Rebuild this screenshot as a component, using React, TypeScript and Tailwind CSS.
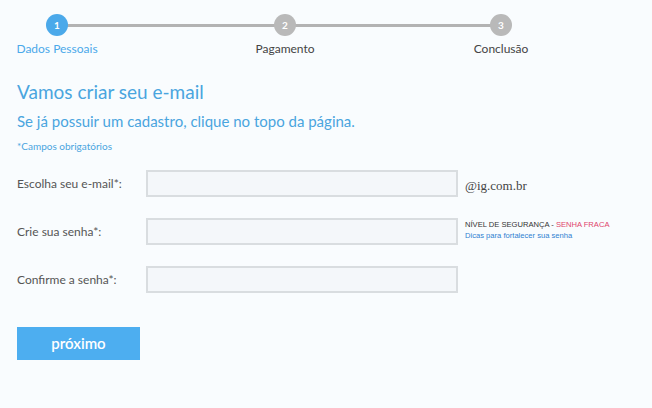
import React from 'react'

const font = { fontFamily: 'Lato, "Open Sans", sans-serif' }

function StepDot({ n, active }: { n: number; active?: boolean }) {
  return (
    <div
      className={`relative z-10 flex h-[22px] w-[22px] items-center justify-center rounded-full text-[10px] font-bold text-white ${
        active ? 'bg-[#4ba9ea]' : 'bg-[#b9b9b9]'
      }`}
    >
      {n}
    </div>
  )
}

function Field({ label, children }: { label: string; children?: React.ReactNode }) {
  return (
    <div className="flex h-[27px] items-center">
      <label className="w-[129px] text-[12px] text-[#555]">{label}</label>
      <input
        type="text"
        className="h-[27px] w-[312px] border-2 border-[#d9dde0] bg-[#f4f7fa] outline-none"
      />
      <div className="ml-[7px]">{children}</div>
    </div>
  )
}

export default function App() {
  return (
    <div className="min-h-[408px] w-full bg-[#f9fcfe] pl-[17px] pt-[14px]" style={font}>
      {/* stepper */}
      <div className="relative flex w-[524px]">
        <div className="absolute left-[40px] top-[10px] h-[3px] w-[444px] bg-[#b3b3b3]" />
        <div className="flex w-[80px] flex-col items-center">
          <StepDot n={1} active />
          <span className="mt-[4px] whitespace-nowrap text-[12px] text-[#4ba9ea]">Dados Pessoais</span>
        </div>
        <div className="w-[148px]" />
        <div className="flex w-[80px] flex-col items-center">
          <StepDot n={2} />
          <span className="mt-[4px] whitespace-nowrap text-[12px] text-[#444]">Pagamento</span>
        </div>
        <div className="w-[136px]" />
        <div className="flex w-[80px] flex-col items-center">
          <StepDot n={3} />
          <span className="mt-[4px] whitespace-nowrap text-[12px] text-[#444]">Conclusão</span>
        </div>
      </div>

      <h1 className="mt-[21px] text-[19px] leading-[26px] text-[#4aa5de]">Vamos criar seu e-mail</h1>
      <p className="mt-[6px] text-[15px] leading-[20px] text-[#4aa5de]">
        Se já possuir um cadastro, clique no topo da página.
      </p>
      <p className="mt-[8px] text-[10px] text-[#4aa5de]">*Campos obrigatórios</p>

      <div className="mt-[16px] flex flex-col gap-[21px]">
        <Field label="Escolha seu e-mail*:">
          <span className="text-[13px] text-[#444]" style={{ fontFamily: '"Liberation Serif", serif' }}>
            @ig.com.br
          </span>
        </Field>
        <Field label="Crie sua senha*:">
          <div className="-mt-[4px] text-[7.6px] leading-[11px]" style={{ fontFamily: '"Liberation Sans", Arial, sans-serif' }}>
            <div className="text-[#333]">
              NÍVEL DE SEGURANÇA - <span className="text-[#e0436b]">SENHA FRACA</span>
            </div>
            <div className="text-[#2f7fd1]">Dicas para fortalecer sua senha</div>
          </div>
        </Field>
        <Field label="Confirme a senha*:" />
      </div>

      <button
        type="button"
        className="mt-[34px] h-[33px] w-[123px] bg-[#4daef0] text-[15px] font-semibold text-white"
      >
        próximo
      </button>
    </div>
  )
}
